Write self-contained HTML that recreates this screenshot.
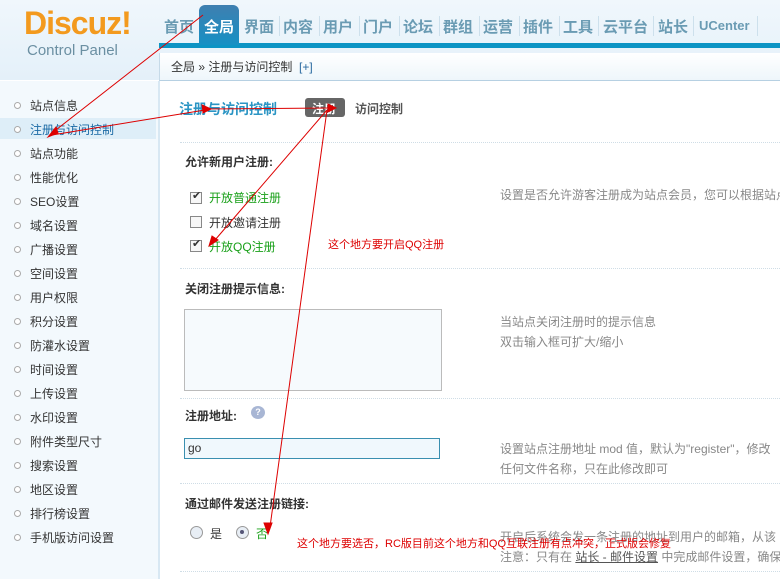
<!DOCTYPE html><html><head><meta charset="utf-8"><style>
body{margin:0;width:780px;height:579px;overflow:hidden;font-family:"Liberation Sans","Noto Sans CJK SC",sans-serif;font-size:12px;background:#fff;position:relative;color:#333}
.a{position:absolute;white-space:nowrap}
#hd{position:absolute;left:0;top:0;width:780px;height:80px;background:linear-gradient(#f0f7fc,#e4f0f9)}
#bar{position:absolute;left:159px;top:43px;width:621px;height:5px;background:#0d94c4}
#bc{position:absolute;left:159px;top:53px;width:621px;height:27px;background:linear-gradient(#fff,#eef6fb);border-bottom:1px solid #b6d0e2;border-left:1px solid #c6dae8}
#sb{position:absolute;left:0;top:81px;width:158px;height:498px;background:#f3f9fd;border-right:2px solid #d8e8f3}
.nav{position:absolute;top:16px;font-size:15px;font-weight:bold;color:#6a9bb3}
.sep{position:absolute;top:16px;width:1px;height:20px;background:#cde0ec}
.si{position:absolute;left:30px;font-size:12px;color:#333}
.dot{position:absolute;left:14px;width:5px;height:5px;border:1px solid #aaa;border-radius:50%;background:#fff}
.h{font-weight:bold;color:#333;font-size:12px}
.tip{color:#888;font-size:12px}
.dl{position:absolute;left:180px;width:600px;border-top:1px dotted #cfdde6}
.cb{position:absolute;left:190px;width:10px;height:10px;border:1px solid #888;background:#f7f7f7}
</style></head><body>
<div id="hd"></div>
<div class="a" style="left:24px;top:5px;font-size:32px;font-weight:bold;color:#f39a1e;letter-spacing:-1px">Discuz!</div>
<div class="a" style="left:27px;top:42px;font-size:15px;color:#6b8fa2">Control Panel</div>
<div id="bar"></div>
<div class="a" style="left:199px;top:5px;width:40px;height:40px;background:linear-gradient(#3f7fb0,#1790c4);border-radius:6px 6px 0 0"></div>
<div class="nav" style="left:164px">首页</div>
<div class="nav" style="left:204px;color:#fff">全局</div>
<div class="nav" style="left:244px">界面</div><div class="sep" style="left:279px"></div>
<div class="nav" style="left:283px">内容</div><div class="sep" style="left:319px"></div>
<div class="nav" style="left:323px">用户</div><div class="sep" style="left:359px"></div>
<div class="nav" style="left:363px">门户</div><div class="sep" style="left:399px"></div>
<div class="nav" style="left:403px">论坛</div><div class="sep" style="left:439px"></div>
<div class="nav" style="left:443px">群组</div><div class="sep" style="left:479px"></div>
<div class="nav" style="left:483px">运营</div><div class="sep" style="left:519px"></div>
<div class="nav" style="left:523px">插件</div><div class="sep" style="left:559px"></div>
<div class="nav" style="left:563px">工具</div><div class="sep" style="left:598px"></div>
<div class="nav" style="left:603px">云平台</div><div class="sep" style="left:653px"></div>
<div class="nav" style="left:658px">站长</div><div class="sep" style="left:693px"></div>
<div class="nav" style="left:699px;font-size:13px;top:18px">UCenter</div><div class="sep" style="left:757px"></div>
<div id="bc"></div>
<div class="a" style="left:171px;top:58px;font-size:12px;color:#333">全局 » 注册与访问控制 &nbsp;<span style="color:#2a6aa0">[+]</span></div>
<div id="sb"></div>
<div class="a" style="left:0;top:118px;width:156px;height:21px;background:#deeef8"></div>
<div id="side"></div>
<script>
var s=["站点信息","注册与访问控制","站点功能","性能优化","SEO设置","域名设置","广播设置","空间设置","用户权限","积分设置","防灌水设置","时间设置","上传设置","水印设置","附件类型尺寸","搜索设置","地区设置","排行榜设置","手机版访问设置"],h="";
for(var i=0;i<s.length;i++){var y=97+i*24;h+='<div class="dot" style="top:'+(y+5)+'px"></div><div class="si a" style="top:'+y+'px;'+(i==1?'color:#1b6aa5':'')+'">'+s[i]+'</div>';}
document.getElementById('side').outerHTML=h;
</script>
<div class="a" style="left:179px;top:99px;font-size:14px;font-weight:bold;color:#2b95c4">注册与访问控制</div>
<div class="a" style="left:305px;top:98px;width:40px;height:19px;background:#666;border-radius:3px"></div>
<div class="a" style="left:312px;top:100px;font-weight:bold;color:#fff">注册</div>
<div class="a" style="left:355px;top:100px;font-weight:bold;color:#555">访问控制</div>
<div class="dl" style="top:142px"></div>
<div class="a h" style="left:185px;top:153px">允许新用户注册:</div>
<div class="cb" style="top:192px"></div><div class="a" style="left:192px;top:189px;font-size:11px;color:#333">✔</div>
<div class="a" style="left:209px;top:189px;color:#19a019">开放普通注册</div>
<div class="cb" style="top:216px"></div>
<div class="a" style="left:209px;top:214px">开放邀请注册</div>
<div class="cb" style="top:240px"></div><div class="a" style="left:192px;top:237px;font-size:11px">✔</div>
<div class="a" style="left:209px;top:238px;color:#19a019">开放QQ注册</div>
<div class="a tip" style="left:500px;top:186px">设置是否允许游客注册成为站点会员，您可以根据站点</div>
<div class="a" style="left:328px;top:236px;color:#d00;font-size:11px">这个地方要开启QQ注册</div>
<div class="dl" style="top:268px"></div>
<div class="a h" style="left:185px;top:280px">关闭注册提示信息:</div>
<div class="a" style="left:184px;top:309px;width:256px;height:80px;border:1px solid #bbb;background:#f6fafd"></div>
<div class="a tip" style="left:500px;top:313px">当站点关闭注册时的提示信息</div>
<div class="a tip" style="left:500px;top:333px">双击输入框可扩大/缩小</div>
<div class="dl" style="top:398px"></div>
<div class="a h" style="left:185px;top:407px">注册地址:</div>
<div class="a" style="left:251px;top:406px;width:14px;height:13px;background:#a8b6d4;border-radius:50%;color:#fff;font-size:9px;text-align:center;line-height:13px;font-weight:bold">?</div>
<div class="a" style="left:184px;top:438px;width:254px;height:19px;border:1px solid #3a8fb0;background:#f0f8fd"></div>
<div class="a" style="left:188px;top:441px;font-size:12px">go</div>
<div class="a tip" style="left:500px;top:440px">设置站点注册地址 mod 值，默认为"register"，修改</div>
<div class="a tip" style="left:500px;top:460px">任何文件名称，只在此修改即可</div>
<div class="dl" style="top:483px"></div>
<div class="a h" style="left:185px;top:495px">通过邮件发送注册链接:</div>
<div class="a" style="left:190px;top:526px;width:11px;height:11px;border:1px solid #999;border-radius:50%;background:#e8eef5"></div>
<div class="a" style="left:210px;top:525px">是</div>
<div class="a" style="left:236px;top:526px;width:11px;height:11px;border:1px solid #999;border-radius:50%;background:#e8eef5"></div>
<div class="a" style="left:240px;top:530px;width:4px;height:4px;border-radius:50%;background:#557"></div>
<div class="a" style="left:256px;top:525px;color:#19a019">否</div>
<div class="a tip" style="left:500px;top:528px">开启后系统会发一条注册的地址到用户的邮箱，从该</div>
<div class="a tip" style="left:500px;top:548px">注意：只有在 <u style="color:#555">站长 - 邮件设置</u> 中完成邮件设置，确保</div>
<div class="a" style="left:297px;top:535px;color:#d00;font-size:11px">这个地方要选否，RC版目前这个地方和QQ互联注册有点冲突，正式版会修复</div>
<div class="dl" style="top:571px"></div>
<svg class="a" style="left:0;top:0" width="780" height="579"><g stroke="#d00" stroke-width="1" fill="#d00">
<line x1="203" y1="15" x2="52" y2="133"/><polygon points="48,137 56,127 58,133"/>
<line x1="52" y1="135" x2="205" y2="110"/><polygon points="211,109 202,105 203,113"/>
<line x1="205" y1="109" x2="330" y2="108"/><polygon points="336,108 328,104 328,112"/>
<line x1="327" y1="110" x2="215" y2="240"/><polygon points="209,246 212,236 218,240"/>
<line x1="327" y1="110" x2="270" y2="527"/><polygon points="268,534 264,523 272,523"/>
</g></svg>
</body></html>
